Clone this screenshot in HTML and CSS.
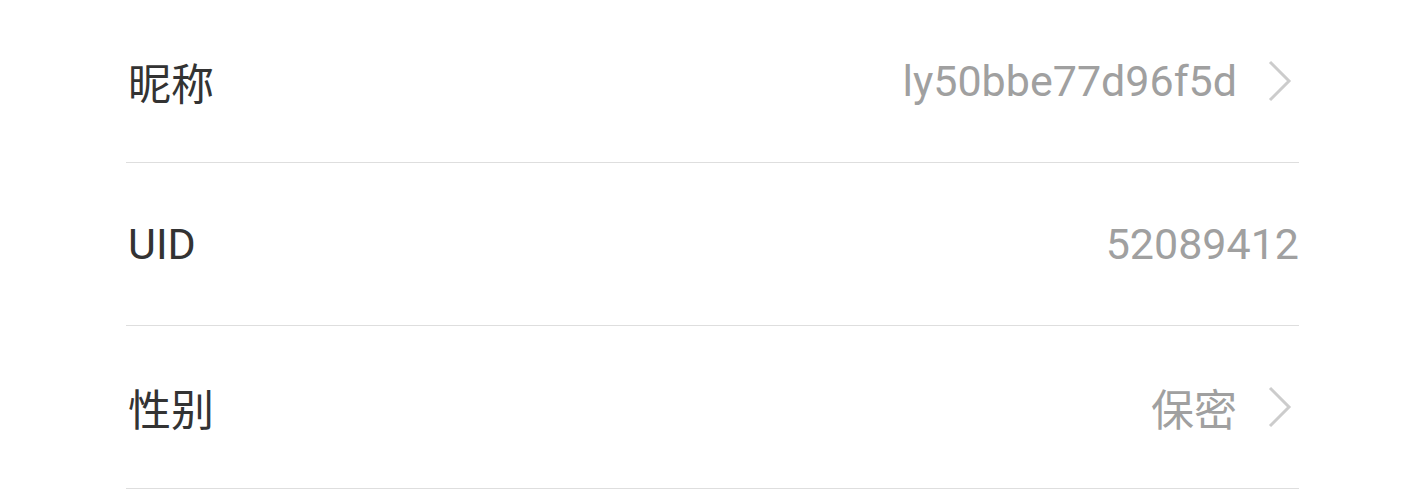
FILE: index.html
```html
<!DOCTYPE html>
<html lang="zh-CN">
<head>
  <meta charset="UTF-8" />
  <meta name="viewport" content="width=device-width, initial-scale=1.0"/>
  <title>个人资料</title>
  <link rel="stylesheet" href="styles.css">
</head>
<body>
  <div class="list">
    <div class="row">
      <span class="label">昵称</span>
      <span class="value">ly50bbe77d96f5d</span>
      <svg class="arrow" viewBox="0 0 26 44" width="26" height="44"><path d="M3 3 L22 22 L3 41" /></svg>
    </div>
    <div class="row">
      <span class="label">UID</span>
      <span class="value">52089412</span>
    </div>
    <div class="row">
      <span class="label">性别</span>
      <span class="value">保密</span>
      <svg class="arrow" viewBox="0 0 26 44" width="26" height="44"><path d="M3 3 L22 22 L3 41" /></svg>
    </div>
  </div>
</body>
</html>
```

FILE: styles.css
```css
body {
  margin: 0;
  background: #fff;
  font-family: Roboto, "Noto Sans CJK SC", sans-serif;
}

.list {
  padding: 0 126px;
}

.row {
  display: flex;
  align-items: center;
  height: 162px;
  border-bottom: 1px solid #dedede;
}

.label {
  flex: 1;
  font-size: 43px;
  color: #333;
  padding-left: 2px;
}

.value {
  font-size: 43px;
  color: #a0a0a0;
}

.arrow {
  margin-left: 30px;
  margin-right: 6px;
}

.arrow path {
  fill: none;
  stroke: #cccccc;
  stroke-width: 3;
}
```
